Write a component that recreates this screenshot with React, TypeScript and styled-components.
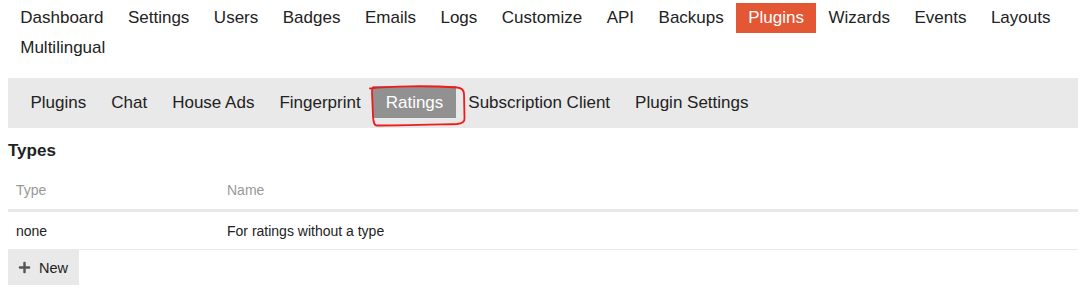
import React from "react";
import styled, { createGlobalStyle } from "styled-components";
import { FaPlus } from "react-icons/fa";

const GlobalStyle = createGlobalStyle`
  body {
    margin: 0;
    background: #ffffff;
    color: #222222;
    font-family: "Liberation Sans", Arial, sans-serif;
  }
`;

const Page = styled.div`
  padding: 3px 12px 0 8px;
`;

const MainNav = styled.ul`
  display: flex;
  flex-wrap: wrap;
  list-style: none;
  margin: 0;
  padding: 0;
`;

const MainNavItem = styled.li<{ $active?: boolean }>`
  padding: 5px 12.25px;
  font-size: 17px;
  line-height: 20px;
  color: ${(p) => (p.$active ? "#ffffff" : "#222222")};
  background: ${(p) => (p.$active ? "#e45735" : "transparent")};
`;

const SubNav = styled.ul`
  display: flex;
  list-style: none;
  margin: 15px 0 0;
  padding: 8px 10px 10px;
  background: #e9e9e9;
`;

const SubNavItem = styled.li<{ $active?: boolean }>`
  position: relative;
  padding: 7px 12.5px 5px;
  font-size: 17px;
  line-height: 20px;
  color: ${(p) => (p.$active ? "#ffffff" : "#222222")};
  background: ${(p) => (p.$active ? "#919191" : "transparent")};
`;

// hand drawn red marker round the active tab
const Annotation = styled.svg`
  position: absolute;
  left: -4px;
  top: -2px;
  width: 96px;
  height: 42px;
  overflow: visible;
  pointer-events: none;
`;

const SectionTitle = styled.h3`
  margin: 13px 0 11px;
  font-size: 17px;
  line-height: 20px;
  font-weight: bold;
  color: #222222;
`;

const Table = styled.table`
  width: 100%;
  table-layout: fixed;
  border-collapse: collapse;
  font-size: 14px;
  line-height: 21px;
`;

const HeadCell = styled.th<{ $width?: number }>`
  width: ${(p) => (p.$width ? `${p.$width}px` : "auto")};
  padding: 8px;
  text-align: left;
  font-weight: normal;
  color: #999999;
  border-bottom: 3px solid #e9e9e9;
`;

const Cell = styled.td`
  padding: 9px 8px 7px;
  color: #222222;
  border-bottom: 1px solid #e9e9e9;
`;

const Button = styled.button`
  display: inline-flex;
  align-items: center;
  gap: 8px;
  height: 35px;
  margin: 0;
  padding: 0 11px 0 10px;
  border: none;
  background: #e9e9e9;
  color: #222222;
  font-family: inherit;
  font-size: 14.5px;
  line-height: 20px;
  svg {
    color: #555555;
  }
`;

const mainLinks = [
  "Dashboard",
  "Settings",
  "Users",
  "Badges",
  "Emails",
  "Logs",
  "Customize",
  "API",
  "Backups",
  "Plugins",
  "Wizards",
  "Events",
  "Layouts",
  "Multilingual",
];

const pluginLinks = [
  "Plugins",
  "Chat",
  "House Ads",
  "Fingerprint",
  "Ratings",
  "Subscription Client",
  "Plugin Settings",
];

export default function App() {
  return (
    <Page>
      <GlobalStyle />
      <MainNav>
        {mainLinks.map((l) => (
          <MainNavItem key={l} $active={l === "Plugins"}>
            {l}
          </MainNavItem>
        ))}
      </MainNav>
      <SubNav>
        {pluginLinks.map((l) => (
          <SubNavItem key={l} $active={l === "Ratings"}>
            {l}
            {l === "Ratings" && (
              <Annotation viewBox="0 0 96 42">
                <path
                  d="M1 4.5 C20 2 60 1.5 88 3.5 C93 4 95 6 95 10 L95.5 34 C96 38 93 39.5 88 40 C65 40.5 25 41.5 8 41.5 C5 41.5 4.5 38 4 33 L3 8 C3 5.5 3 4.5 4 3.5"
                  fill="none"
                  stroke="#ee1c1c"
                  strokeWidth="1.8"
                  strokeLinecap="round"
                  strokeLinejoin="round"
                />
              </Annotation>
            )}
          </SubNavItem>
        ))}
      </SubNav>

      <SectionTitle>Types</SectionTitle>
      <Table>
        <thead>
          <tr>
            <HeadCell $width={195}>Type</HeadCell>
            <HeadCell>Name</HeadCell>
          </tr>
        </thead>
        <tbody>
          <tr>
            <Cell>none</Cell>
            <Cell>For ratings without a type</Cell>
          </tr>
        </tbody>
      </Table>
      <Button>
        <FaPlus size={13} />
        New
      </Button>

      <SectionTitle>Categories</SectionTitle>
    </Page>
  );
}
